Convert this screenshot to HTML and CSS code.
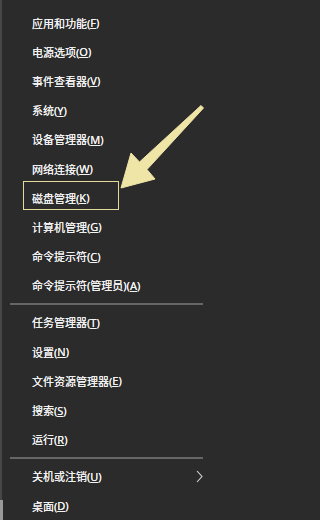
FILE: index.html
```html
<!DOCTYPE html>
<html lang="zh-CN">
<head>
<meta charset="utf-8">
<link rel="stylesheet" href="styles.css">
</head>
<body>
<div class="menu">
  <div class="item">应用和功能(<u>F</u>)</div>
  <div class="item">电源选项(<u>O</u>)</div>
  <div class="item">事件查看器(<u>V</u>)</div>
  <div class="item">系统(<u>Y</u>)</div>
  <div class="item">设备管理器(<u>M</u>)</div>
  <div class="item">网络连接(<u>W</u>)</div>
  <div class="item">磁盘管理(<u>K</u>)</div>
  <div class="item">计算机管理(<u>G</u>)</div>
  <div class="item">命令提示符(<u>C</u>)</div>
  <div class="item">命令提示符(管理员)(<u>A</u>)</div>
  <div class="sep"></div>
  <div class="item">任务管理器(<u>T</u>)</div>
  <div class="item">设置(<u>N</u>)</div>
  <div class="item">文件资源管理器(<u>E</u>)</div>
  <div class="item">搜索(<u>S</u>)</div>
  <div class="item">运行(<u>R</u>)</div>
  <div class="sep"></div>
  <div class="item has-sub"><span>关机或注销(<u>U</u>)</span>
    <svg class="chev" width="7" height="13" viewBox="0 0 7 13"><path d="M1 1 L6 6.5 L1 12" fill="none" stroke="#d8d8d8" stroke-width="1.1"/></svg>
  </div>
  <div class="item">桌面(<u>D</u>)</div>
  <div class="corner"></div>
</div>
<div class="highlight"></div>
<svg class="arrow" width="209" height="520" viewBox="0 0 209 520">
  <polygon points="201,105.5 203.5,108 147,169.5 155,179 121,188 131,153 139.5,162" fill="#efe5a6" stroke="#efe5a6" stroke-width="1" stroke-linejoin="round"/>
</svg>
</body>
</html>
```
FILE: styles.css
```css
html, body {
  margin: 0;
  padding: 0;
  background: #2b2b2b;
}
body {
  width: 209px;
  height: 520px;
  overflow: hidden;
  position: relative;
  font-family: "Noto Sans", "Noto Sans CJK SC", sans-serif;
  font-size: 11px;
  color: #f4f4f4;
  text-shadow: 0 0 0.4px #f4f4f4;
}
.menu {
  box-sizing: border-box;
  height: 520px;
  padding-top: 8px;
  border-left: 2px solid #474747;
  display: flex;
  flex-direction: column;
  position: relative;
}
.item {
  height: 29.2px;
  flex: none;
  display: flex;
  align-items: center;
  padding-left: 30px;
  white-space: nowrap;
}
.item u {
  text-decoration: underline;
  text-underline-offset: 1px;
  text-decoration-thickness: 1px;
}
.has-sub {
  justify-content: space-between;
  padding-right: 6px;
}
.chev {
  display: block;
}
.sep {
  height: 8px;
  flex: none;
  display: flex;
  align-items: center;
  padding-left: 8px;
  padding-right: 6px;
}
.sep::before {
  content: "";
  display: block;
  height: 2px;
  width: 100%;
  background: #666666;
}
.corner {
  position: absolute;
  left: -2px;
  bottom: 0;
  width: 3px;
  height: 20px;
  background: #9a9a9a;
}
.highlight {
  position: absolute;
  left: 23px;
  top: 181px;
  width: 94px;
  height: 27px;
  border: 1.5px solid #e4da9c;
}
.arrow {
  position: absolute;
  left: 0;
  top: 0;
  pointer-events: none;
}
```
